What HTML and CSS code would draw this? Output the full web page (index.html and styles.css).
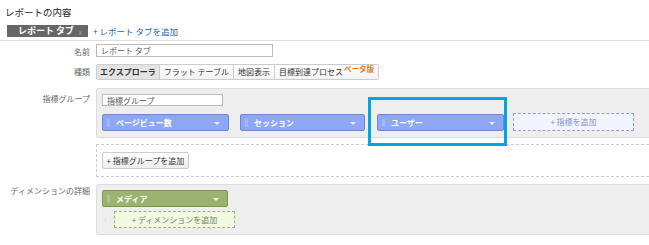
FILE: index.html
```html
<!DOCTYPE html>
<html lang="ja">
<head>
    <meta charset="UTF-8">
    <title>レポートの内容</title>
    <link rel="stylesheet" href="styles.css">
</head>
<body>
    <div class="titulo">レポートの内容</div>
    <div class="abas">
        <span class="aba">レポート タブ <span class="fechar">x</span></span>
        <a class="add-aba">+ レポート タブを追加</a>
    </div>
    <div class="form">
        <div class="linha l-nome">
            <div class="rotulo">名前</div>
            <div class="campo"><input class="texto nome" type="text" value="レポート タブ"></div>
        </div>
        <div class="linha l-tipo">
            <div class="rotulo">種類</div>
            <div class="campo">
                <div class="seg">
                    <span class="ativo">エクスプローラ</span><span>フラット テーブル</span><span>地図表示</span><span>目標到達プロセス<b class="beta">ベータ版</b></span>
                </div>
            </div>
        </div>
        <div class="linha l-grupo">
            <div class="rotulo">指標グループ</div>
            <div class="campo caixa">
                <input class="texto grupo-nome" type="text" value="指標グループ">
                <div class="pilulas">
                    <div class="pilula azul"><i class="grip"></i>ページビュー数<span class="seta"></span></div>
                    <div class="pilula azul"><i class="grip"></i>セッション<span class="seta"></span></div>
                    <div class="pilula azul destaque"><i class="grip"></i>ユーザー<span class="seta"></span><span class="moldura"></span></div>
                    <div class="add-metrica">+ 指標を追加</div>
                </div>
            </div>
        </div>
        <div class="linha l-add">
            <div class="rotulo"></div>
            <div class="campo tracejado">
                <button class="botao">+ 指標グループを追加</button>
            </div>
        </div>
        <div class="linha l-dim">
            <div class="rotulo">ディメンションの詳細</div>
            <div class="campo caixa">
                <div class="pilula verde"><i class="grip"></i>メディア<span class="seta"></span></div>
                <div class="sub">
                    <span class="mini">&#8250;</span>
                    <div class="add-dim">+ ディメンションを追加</div>
                </div>
            </div>
        </div>
    </div>
</body>
</html>
```

FILE: styles.css
```css
body {
    margin: 0;
    background: #fff;
    font-family: "Noto Sans CJK JP", "Noto Sans", sans-serif;
    font-size: 8px;
    color: #333;
    width: 649px;
    overflow: hidden;
}
.titulo {
    padding: 7px 0 0 5px;
    height: 14px;
    line-height: 11px;
    font-size: 9.5px;
    color: #222;
}
.abas {
    display: flex;
    align-items: center;
    padding: 4px 0 3px 7px;
    height: 12px;
    border-bottom: 1px solid #ddd;
}
.aba {
    background: #666;
    color: #fff;
    font-weight: bold;
    height: 12px;
    line-height: 12px;
    width: 81px;
    padding-left: 11px;
    box-sizing: border-box;
    font-size: 9px;
    position: relative;
}
.fechar {
    position: absolute;
    right: 6px;
    top: 1px;
    font-size: 7px;
    color: #aaa;
    font-weight: normal;
}
.add-aba {
    color: #1e5fb4;
    margin-left: 5px;
    font-size: 8.5px;
    line-height: 12px;
}
.form {
    padding-top: 3px;
}
.linha {
    display: flex;
    align-items: flex-start;
}
.rotulo {
    width: 90px;
    text-align: right;
    color: #666;
    font-size: 8px;
    flex-shrink: 0;
}
.campo {
    margin-left: 6px;
    flex: 1;
}
.l-nome .rotulo { padding-top: 1px; line-height: 13px; }
.texto {
    border: 1px solid #bbb;
    height: 13px;
    box-sizing: border-box;
    font-family: inherit;
    font-size: 8px;
    color: #555;
    padding: 0 4px;
    margin: 0;
    display: block;
}
.nome { width: 177px; }
.l-tipo { margin-top: 6px; }
.l-tipo .rotulo { line-height: 16px; }
.seg {
    display: inline-flex;
    border: 1px solid #ccc;
    border-radius: 2px;
    height: 16px;
    box-sizing: border-box;
}
.seg span {
    padding: 0 4px;
    line-height: 14px;
    font-size: 8px;
    color: #333;
    border-left: 1px solid #ccc;
    background: linear-gradient(#fff, #f3f3f3);
}
.seg span:first-child { border-left: none; }
.seg .ativo {
    background: #e4e4e4;
    font-weight: bold;
    padding: 0 3px;
}
.beta {
    color: #e87722;
    font-size: 7.5px;
    line-height: 1;
    position: relative;
    top: -3px;
    margin-left: 1px;
}
.l-grupo { margin-top: 8px; }
.l-grupo .rotulo { padding-top: 5px; }
.caixa {
    background: #eee;
    border: 1px solid #ddd;
    border-right: none;
    border-radius: 3px 0 0 3px;
    padding: 5px 0 6px 5px;
}
.grupo-nome {
    width: 121px;
    height: 12px;
}
.pilulas {
    display: flex;
    align-items: center;
    margin-top: 7px;
    height: 18px;
}
.pilula {
    position: relative;
    width: 127px;
    height: 17px;
    box-sizing: border-box;
    border: 1px solid #6f86d4;
    border-radius: 2px;
    background: #8da7f6;
    color: #fff;
    font-weight: bold;
    font-size: 8px;
    line-height: 15px;
    padding-left: 13px;
    margin-right: 11px;
}
.pilula:nth-child(2) { width: 125px; margin-right: 12px; }
.grip {
    position: absolute;
    left: 4px;
    top: 4px;
    width: 3px;
    height: 8px;
    background: radial-gradient(circle, rgba(255,255,255,0.4) 0.6px, transparent 0.8px) 0 0 / 2px 2px;
}
.seta {
    position: absolute;
    right: 8px;
    top: 7px;
    border-left: 3px solid transparent;
    border-right: 3px solid transparent;
    border-top: 3px solid #eef;
}
.moldura {
    position: absolute;
    left: -10px;
    top: -18px;
    width: 139px;
    height: 49px;
    border: 3px solid #04a3e2;
    box-sizing: border-box;
}
.add-metrica {
    width: 121px;
    height: 18px;
    box-sizing: border-box;
    border: 1px dashed #8d9fd6;
    background: #f2f5ff;
    color: #8593c4;
    text-align: center;
    line-height: 16px;
    font-size: 8px;
    margin-left: -2px;
}
.l-add { margin-top: 6px; }
.tracejado {
    border: 1px dashed #ccc;
    border-right: none;
    height: 33px;
    box-sizing: border-box;
    padding: 7px 0 0 5px;
}
.botao {
    display: block;
    height: 17px;
    width: 87px;
    border: 1px solid #ccc;
    border-radius: 2px;
    background: linear-gradient(#fff, #eee);
    font-family: inherit;
    font-size: 8px;
    color: #333;
    padding: 0;
    margin: 0;
}
.l-dim { margin-top: 7px; }
.l-dim .rotulo { padding-top: 1px; }
.l-dim .caixa { padding-top: 5px; padding-bottom: 6px; }
.verde {
    background: #9bb36f;
    border-color: #7d964f;
    width: 126px;
}
.sub {
    display: flex;
    align-items: center;
    margin-top: 4px;
}
.mini {
    color: #ccc;
    font-size: 9px;
    width: 12px;
    padding-left: 2px;
    box-sizing: border-box;
}
.add-dim {
    width: 121px;
    height: 17px;
    box-sizing: border-box;
    border: 1px dashed #9cb56c;
    background: #f2f9e3;
    color: #6f7f55;
    text-align: center;
    line-height: 15px;
    font-size: 8px;
}
```
